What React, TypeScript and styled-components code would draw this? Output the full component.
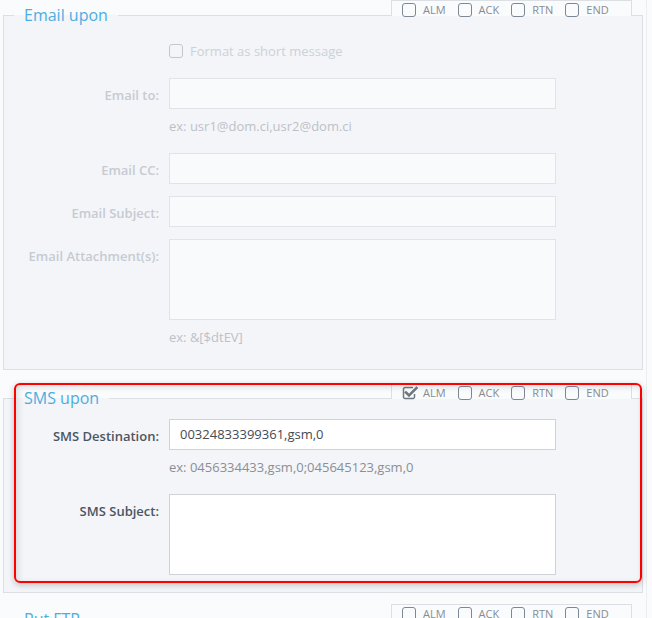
import styled, { createGlobalStyle } from 'styled-components';

const GlobalStyle = createGlobalStyle`
  html, body {
    margin: 0;
    padding: 0;
    background-color: #fafbfc;
    font-family: "Open Sans", "Liberation Sans", sans-serif;
  }
`;

const Page = styled.div`
  width: 647px;
  padding-left: 3px;
  border-right: 1px solid #eceef1;
  min-height: 700px;
  box-sizing: border-box;
`;

const Column = styled.div`
  width: 640px;
  display: flex;
  flex-direction: column;
  gap: 12px;
`;

const Section = styled.div<{ $shift?: number }>`
  position: relative;
  margin-top: ${(p) => p.$shift ?? 0}px;
`;

const Fieldset = styled.fieldset<{ $disabled?: boolean }>`
  margin: 4px 0 0;
  padding: 10px 10px 17px;
  border: 1px solid #dcdfe4;
  background-color: #f4f5f8;
  min-width: 0;
`;

const Legend = styled.legend`
  padding: 0 10px;
  margin: 0;
  font-size: 16px;
  line-height: 22px;
  color: #4caee0;
`;

const Tools = styled.div`
  position: absolute;
  top: 0;
  right: 11px;
  width: 241px;
  height: 16px;
  box-sizing: border-box;
  border: 1px solid #dcdfe4;
  border-bottom: none;
  background-color: #fafbfc;
  display: flex;
  align-items: flex-start;
  gap: 12px;
  padding: 2px 0 0 10px;
`;

const Toggle = styled.label`
  display: flex;
  align-items: center;
  gap: 7px;
  font-size: 11px;
  line-height: 14px;
  color: #878c93;
`;

const Box = styled.span<{ $faded?: boolean }>`
  width: 14px;
  height: 14px;
  box-sizing: border-box;
  border: 1.5px solid ${(p) => (p.$faded ? '#c3c7cd' : '#7d8894')};
  border-radius: 3px;
  display: inline-block;
  flex: none;
`;

const Check = () => (
  <svg width="16" height="14" viewBox="0 0 16 14" style={{ flex: 'none', marginRight: -2 }}>
    <path
      d="M11 1.5 H3 a1.5 1.5 0 0 0 -1.5 1.5 v8 a1.5 1.5 0 0 0 1.5 1.5 h8 a1.5 1.5 0 0 0 1.5 -1.5 V8"
      fill="none"
      stroke="#6f7780"
      strokeWidth="1.5"
    />
    <path d="M4 6.5 L7 9.5 L14.5 2" fill="none" stroke="#6f7780" strokeWidth="2.6" strokeLinecap="square" />
  </svg>
);

const Body = styled.div`
  display: flex;
  flex-direction: column;
  gap: 12px;
`;

const Row = styled.div`
  display: grid;
  grid-template-columns: 145px 387px;
  column-gap: 10px;
  align-items: start;
`;

const OptionRow = styled(Row)`
  height: 30px;
  align-items: center;
`;

const Label = styled.div<{ $faded?: boolean }>`
  text-align: right;
  font-size: 13px;
  font-weight: 600;
  line-height: 18px;
  padding-top: 8px;
  color: ${(p) => (p.$faded ? '#c6cbd3' : '#4b5563')};
`;

const Field = styled.div`
  display: flex;
  flex-direction: column;
`;

const Input = styled.div<{ $faded?: boolean; $tall?: boolean }>`
  height: ${(p) => (p.$tall ? '81px' : '31px')};
  box-sizing: border-box;
  border: 1px solid ${(p) => (p.$faded ? '#e1e3e7' : '#cfd2d6')};
  background-color: ${(p) => (p.$faded ? '#f9fafc' : '#ffffff')};
  padding: 0 10px;
  font-size: 13px;
  line-height: 29px;
  color: #454b52;
`;

const Hint = styled.div<{ $faded?: boolean }>`
  margin: 8px 0 6px;
  font-size: 13px;
  line-height: 18px;
  color: ${(p) => (p.$faded ? '#bcc1c8' : '#8a8f96')};
`;

const Option = styled.label`
  grid-column: 2;
  display: flex;
  align-items: center;
  gap: 7px;
  font-size: 13px;
  color: #cdd1d7;
`;

const Spacer = styled.div`
  height: 60px;
`;

const Highlight = styled.div`
  position: absolute;
  left: 11px;
  top: 0;
  width: 628px;
  height: 200px;
  box-sizing: border-box;
  border: 2px solid #ff0000;
  border-radius: 6px;
  box-shadow: 0 2px 6px rgba(0, 0, 0, 0.22), inset 2px 2px 6px rgba(0, 0, 0, 0.12);
  pointer-events: none;
`;

const events = ['ALM', 'ACK', 'RTN', 'END'];

function EventTools({ checked = [] as string[] }) {
  return (
    <Tools>
      {events.map((e) => (
        <Toggle key={e}>
          {checked.includes(e) ? <Check /> : <Box />}
          {e}
        </Toggle>
      ))}
    </Tools>
  );
}

export default function App() {
  return (
    <>
      <GlobalStyle />
      <Page>
        <Column>
          <Section>
            <Fieldset>
              <Legend>Email upon</Legend>
              <Body>
                <OptionRow>
                  <Option>
                    <Box $faded />
                    Format as short message
                  </Option>
                </OptionRow>
                <Row>
                  <Label $faded>Email to:</Label>
                  <Field>
                    <Input $faded />
                    <Hint $faded>ex: usr1@dom.ci,usr2@dom.ci</Hint>
                  </Field>
                </Row>
                <Row>
                  <Label $faded>Email CC:</Label>
                  <Input $faded />
                </Row>
                <Row>
                  <Label $faded>Email Subject:</Label>
                  <Input $faded />
                </Row>
                <Row>
                  <Label $faded>Email Attachment(s):</Label>
                  <Field>
                    <Input $faded $tall />
                    <Hint $faded>ex: &amp;[$dtEV]</Hint>
                  </Field>
                </Row>
              </Body>
            </Fieldset>
            <EventTools />
          </Section>

          <Section $shift={1}>
            <Fieldset>
              <Legend>SMS upon</Legend>
              <Body>
                <Row>
                  <Label>SMS Destination:</Label>
                  <Field>
                    <Input>00324833399361,gsm,0</Input>
                    <Hint>ex: 0456334433,gsm,0;045645123,gsm,0</Hint>
                  </Field>
                </Row>
                <Row>
                  <Label>SMS Subject:</Label>
                  <Input $tall />
                </Row>
              </Body>
            </Fieldset>
            <EventTools checked={['ALM']} />
            <Highlight />
          </Section>

          <Section $shift={-1}>
            <Fieldset>
              <Legend>Put FTP</Legend>
              <Spacer />
            </Fieldset>
            <EventTools />
          </Section>
        </Column>
      </Page>
    </>
  );
}
